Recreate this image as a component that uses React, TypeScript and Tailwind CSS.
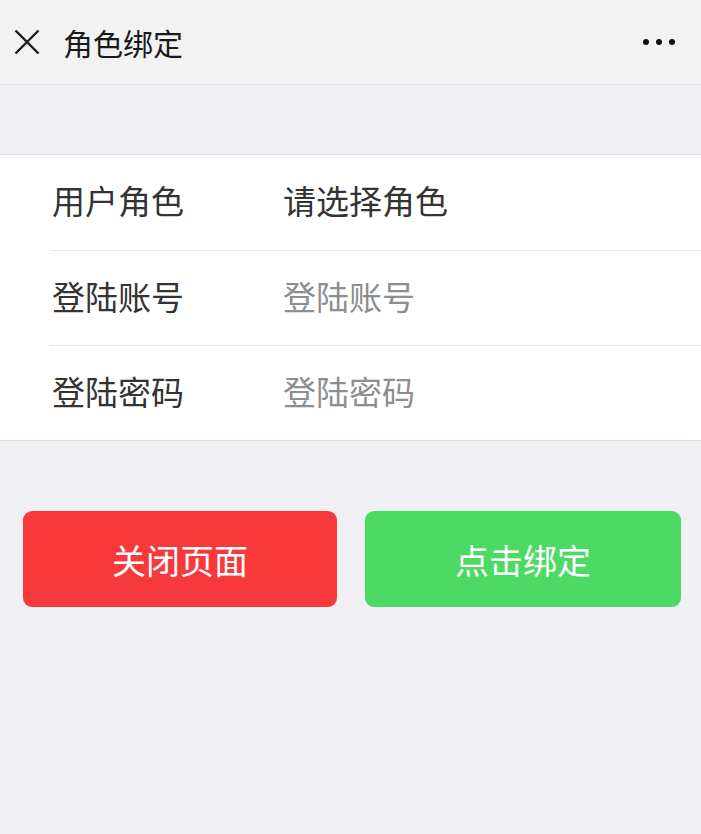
import React from 'react';

const font = { fontFamily: '"Noto Sans CJK SC", "Noto Sans", sans-serif' };

const rows = [
    { label: '用户角色', value: '请选择角色', placeholder: false },
    { label: '登陆账号', value: '登陆账号', placeholder: true },
    { label: '登陆密码', value: '登陆密码', placeholder: true },
];

const App: React.FC = () => {
    return (
        <div className="min-h-screen w-[701px] bg-[#efeff4]" style={font}>
            {/* top bar */}
            <div className="h-[85px] bg-[#f2f2f2] border-b border-[#e3e3e6] flex items-center pl-[14px] pr-[26px]">
                <svg width="26" height="26" viewBox="0 0 26 26" className="shrink-0">
                    <path d="M1.5 1.5 L24.5 24.5 M24.5 1.5 L1.5 24.5" stroke="#1a1a1a" strokeWidth="2.4" fill="none" />
                </svg>
                <span className="ml-[23px] text-[30px] leading-none text-[#1a1a1a]">角色绑定</span>
                <div className="ml-auto flex items-center gap-[7px]">
                    <span className="w-[6px] h-[6px] rounded-full bg-[#111]" />
                    <span className="w-[6px] h-[6px] rounded-full bg-[#111]" />
                    <span className="w-[6px] h-[6px] rounded-full bg-[#111]" />
                </div>
            </div>

            {/* form */}
            <div className="mt-[69px] bg-white border-y border-[#e0e0e3] pl-[50px]">
                {rows.map((r, i) => (
                    <div
                        key={r.label}
                        className={`h-[95px] flex items-center pb-[4px] ${i > 0 ? 'border-t border-[#e6e6e9]' : ''}`}
                    >
                        <span className="w-[233px] shrink-0 pl-[2px] text-[33px] leading-none text-[#333]">{r.label}</span>
                        <span className={`text-[33px] leading-none ${r.placeholder ? 'text-[#8e8e8e]' : 'text-[#333]'}`}>
                            {r.value}
                        </span>
                    </div>
                ))}
            </div>

            {/* buttons */}
            <div className="mt-[70px] pl-[23px] pr-[20px] flex gap-[28px]">
                <button className="w-[314px] h-[96px] rounded-[9px] bg-[#f8393c] text-white text-[34px]">关闭页面</button>
                <button className="w-[316px] h-[96px] rounded-[9px] bg-[#4cd964] text-white text-[34px]">点击绑定</button>
            </div>
        </div>
    );
};

export default App;
